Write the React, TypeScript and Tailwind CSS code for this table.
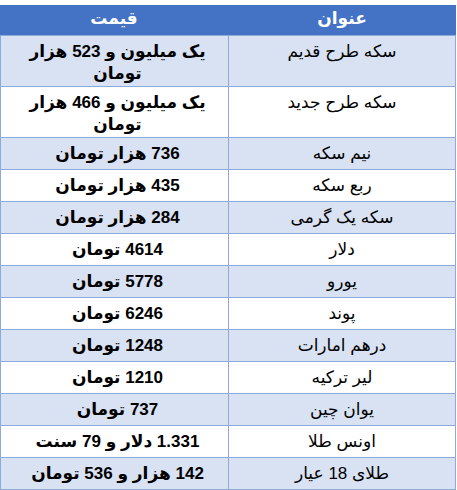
import React from "react";

const Words = ({ s }: { s: string }) => {
  const w = s.split(" ").reverse();
  return (
    <>
      {w.map((x, i) => (
        <React.Fragment key={i}>
          <span className="inline-block">{x}</span>
          {i < w.length - 1 ? " " : null}
        </React.Fragment>
      ))}
    </>
  );
};

type Row = { title: string; price: string[] };

const rows: Row[] = [
  { title: "سکه طرح قدیم", price: ["یک میلیون و 523 هزار", "تومان"] },
  { title: "سکه طرح جدید", price: ["یک میلیون و 466 هزار", "تومان"] },
  { title: "نیم سکه", price: ["736 هزار تومان"] },
  { title: "ربع سکه", price: ["435 هزار تومان"] },
  { title: "سکه یک گرمی", price: ["284 هزار تومان"] },
  { title: "دلار", price: ["4614 تومان"] },
  { title: "یورو", price: ["5778 تومان"] },
  { title: "پوند", price: ["6246 تومان"] },
  { title: "درهم امارات", price: ["1248 تومان"] },
  { title: "لیر ترکیه", price: ["1210 تومان"] },
  { title: "یوان چین", price: ["737 تومان"] },
  { title: "اونس طلا", price: ["1.331 دلار و 79 سنت"] },
  { title: "طلای 18 عیار", price: ["142 هزار و 536 تومان"] },
];

export default function App() {
  return (
    <div className="w-[457px] h-[490px] bg-white pt-[5px] font-['Liberation_Sans','DejaVu_Sans',sans-serif] text-[16px] text-black">
      <div dir="ltr" className="w-[456px] border-x border-b border-[#8EAADB]">
        <div className="grid grid-cols-2 h-[30px] bg-[#4472C4] text-white font-bold text-[17px] leading-[28px] -mx-px">
          <div className="text-center">
            <Words s="قیمت" />
          </div>
          <div className="text-center">
            <Words s="عنوان" />
          </div>
        </div>
        {rows.map((r, i) => (
          <div
            key={i}
            className={
              "grid grid-cols-[228px_1fr] border-t border-[#8EAADB] " +
              (r.price.length > 1 ? "h-[51px] " : "h-[32px] ") +
              (i % 2 === 0 ? "bg-[#D9E2F3]" : "bg-white")
            }
          >
            <div className="border-r border-[#8EAADB] text-center font-bold text-[17px] leading-[22px] pt-[5px] pl-[6px]">
              {r.price.map((l, j) => (
                <div key={j}>
                  <Words s={l} />
                </div>
              ))}
            </div>
            <div className="text-center text-[17px] leading-[22px] pt-[5px]">
              <Words s={r.title} />
            </div>
          </div>
        ))}
      </div>
    </div>
  );
}
